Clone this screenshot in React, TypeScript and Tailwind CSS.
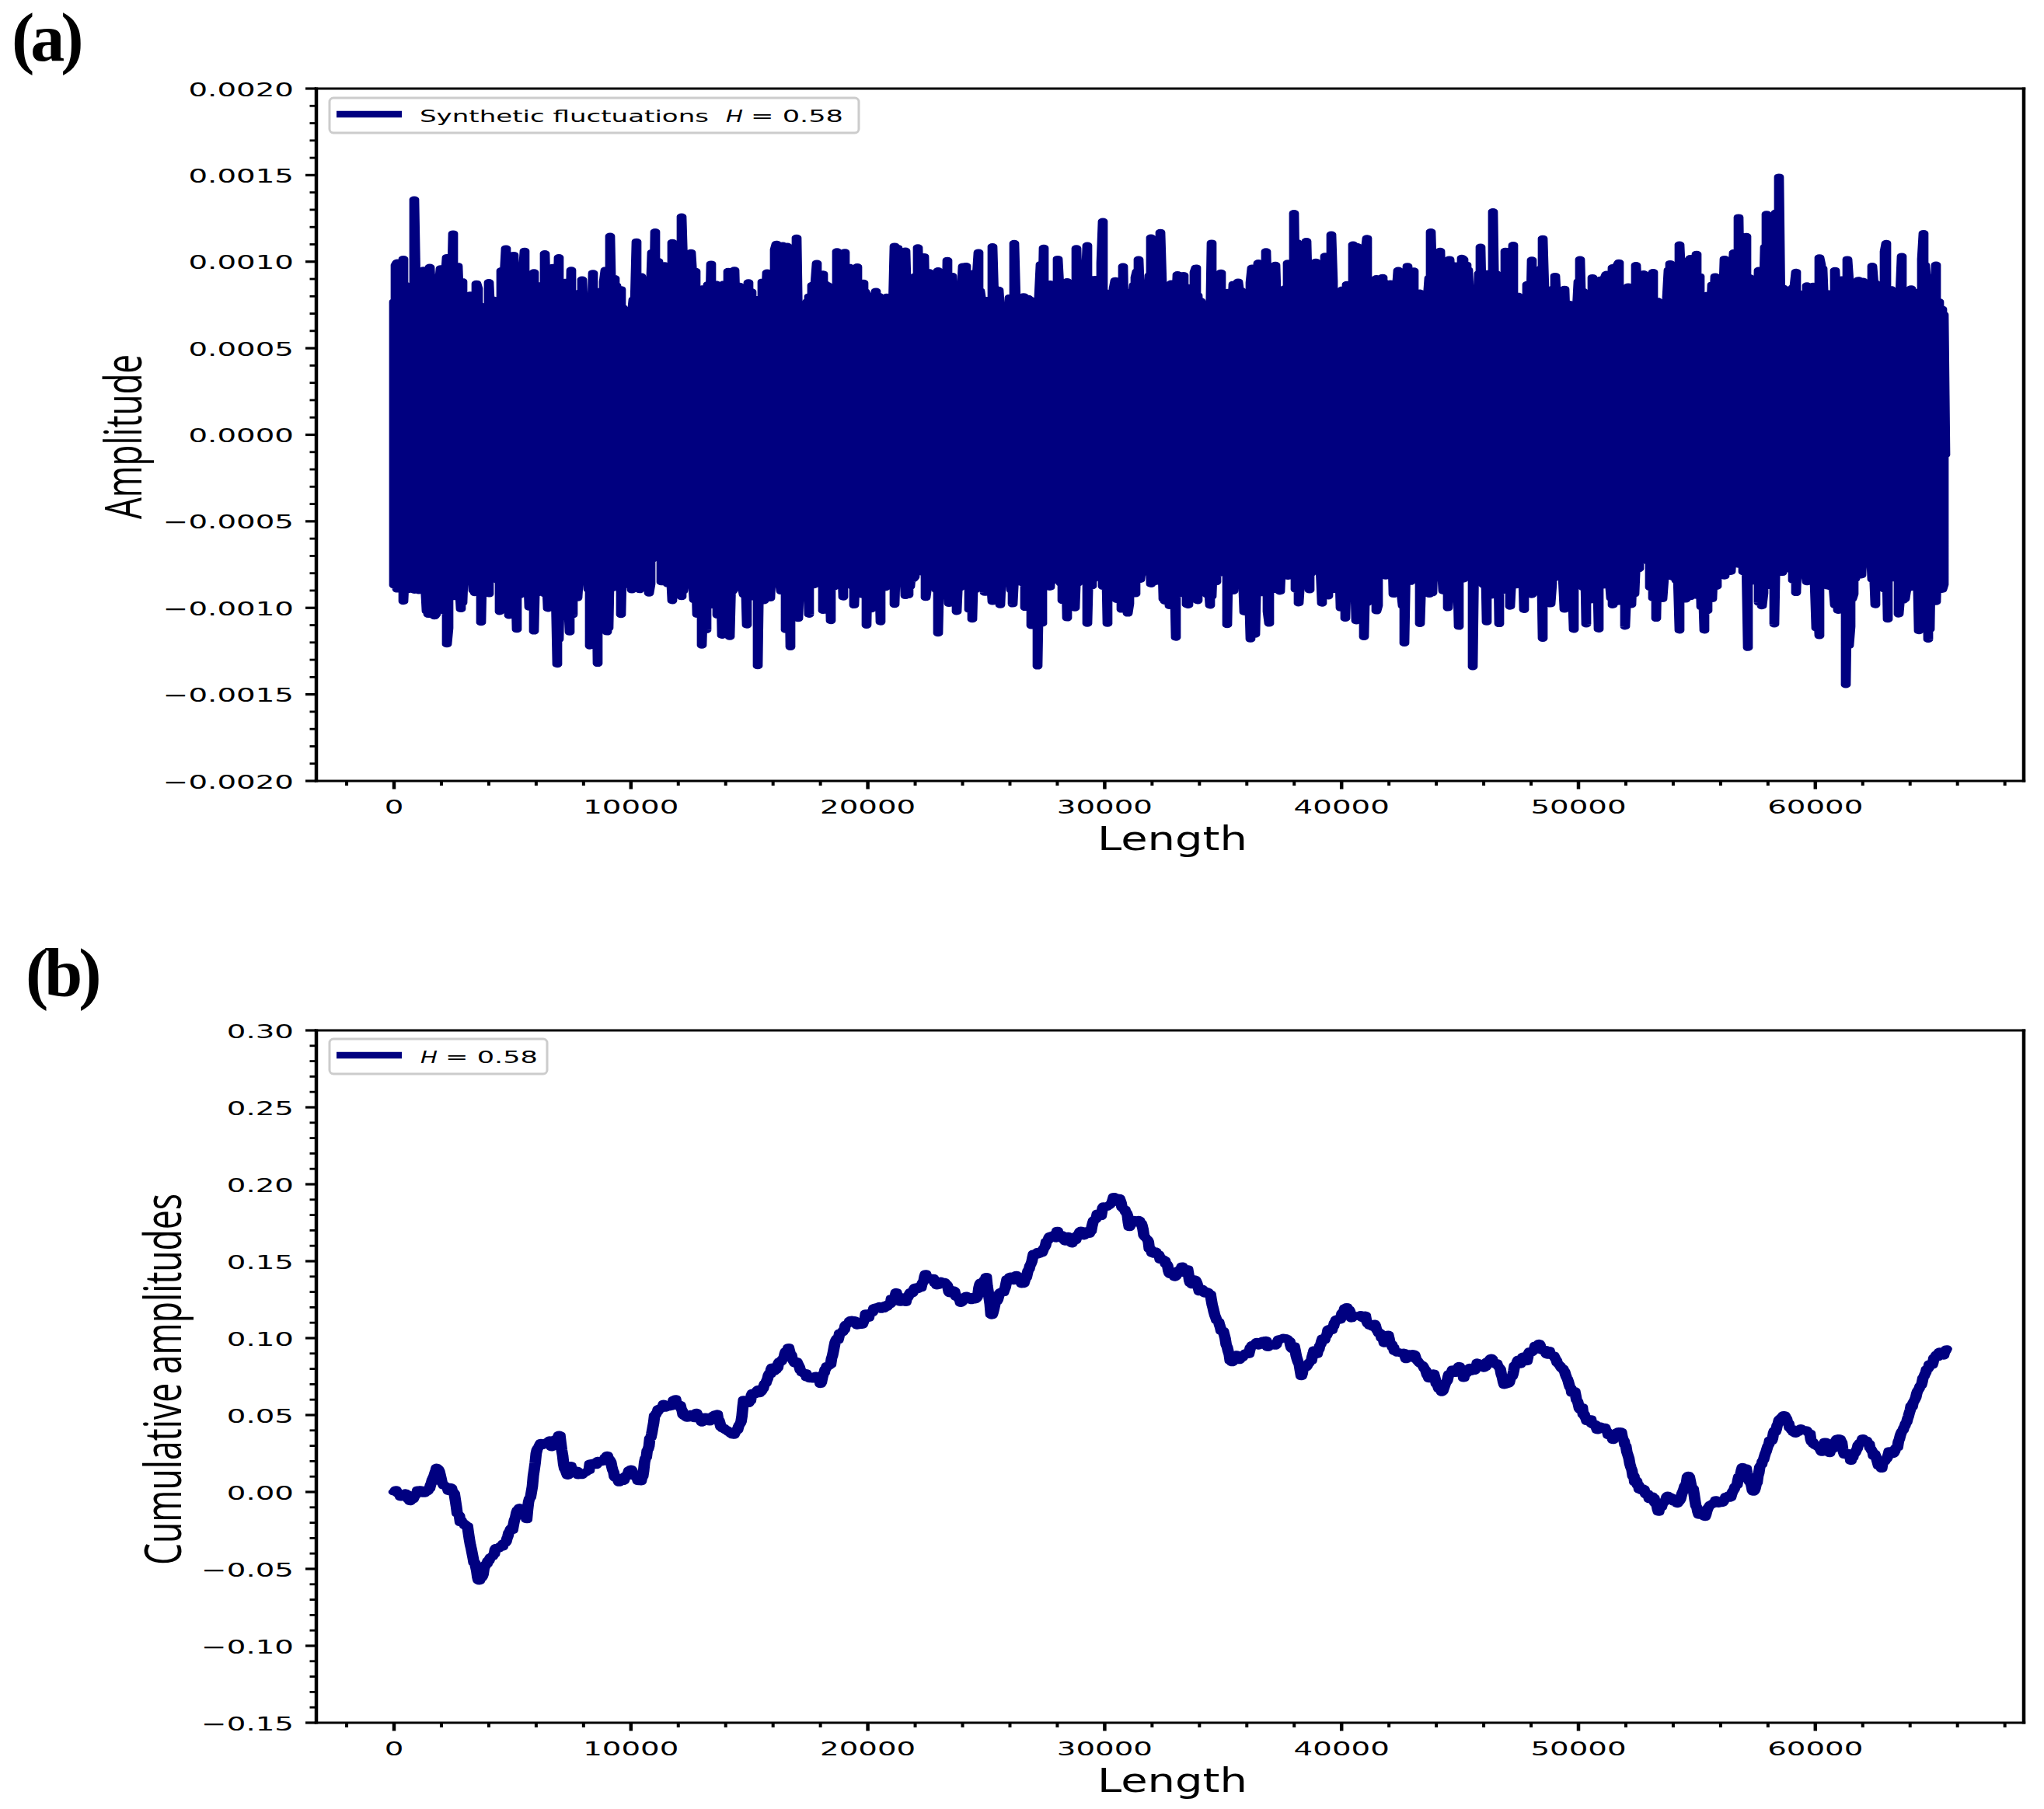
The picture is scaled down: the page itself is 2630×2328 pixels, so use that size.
import React from 'react';

const NAVY = '#000080';
const L = 407;
const R = 2604;
const SX = 1.55;
const X = (d: number) => 507 + d * 0.03048;

function mulberry32(seed: number) {
  let a = seed;
  return function () {
    a |= 0;
    a = (a + 0x6d2b79f5) | 0;
    let t = Math.imul(a ^ (a >>> 15), 1 | a);
    t = (t + Math.imul(t ^ (t >>> 7), 61 | t)) ^ t;
    return ((t ^ (t >>> 14)) >>> 0) / 4294967296;
  };
}

function gaussFactory(seed: number) {
  const rnd = mulberry32(seed);
  return () => {
    const u1 = rnd() || 1e-9;
    const u2 = rnd();
    return Math.sqrt(-2 * Math.log(u1)) * Math.cos(2 * Math.PI * u2);
  };
}

const YA = (v: number) => 114 + (0.002 - v) * 222750;
const YB = (v: number) => 1326 + (0.3 - v) * 1980;

// path coordinates are given in "unstretched" x (divided by SX); the group is scaled back by SX
function noisePath(): string {
  const g = gaussFactory(20240611);
  const N = 65536;
  const sigma = 0.000335;
  const colW = 2;
  const x0 = X(0);
  const x1 = X(N - 1);
  const ncol = Math.floor((x1 - x0) / colW);
  const mins = new Array(ncol + 1).fill(Infinity);
  const maxs = new Array(ncol + 1).fill(-Infinity);
  for (let i = 0; i < N; i++) {
    const v = g() * sigma;
    const c = Math.floor((i / (N - 1)) * ncol);
    if (v < mins[c]) mins[c] = v;
    if (v > maxs[c]) maxs[c] = v;
  }
  let d = '';
  for (let c = 0; c <= ncol; c++) {
    const x = ((x0 + c * colW) / SX).toFixed(2);
    const a = YA(maxs[c]).toFixed(1);
    const b = YA(mins[c]).toFixed(1);
    if (c === 0) d += `M${x},${a}L${x},${b}`;
    else if (c % 2 === 0) d += `L${x},${a}L${x},${b}`;
    else d += `L${x},${b}L${x},${a}`;
  }
  return d;
}

const CTRL: [number, number][] = [
  [0, 0], [0.4, -0.003], [0.8, -0.005], [1.2, -0.001], [1.5, 0.002], [1.8, 0.016], [2.1, 0.004], [2.5, 0.0],
  [2.8, -0.02], [3.1, -0.022], [3.3, -0.04], [3.6, -0.058], [4.0, -0.045], [4.5, -0.035], [5.0, -0.025],
  [5.3, -0.01], [5.6, -0.018], [5.8, 0.0], [6.0, 0.025], [6.2, 0.032], [6.5, 0.033], [7.0, 0.037],
  [7.2, 0.015], [7.5, 0.015], [8.0, 0.012], [8.5, 0.018], [9.0, 0.024], [9.5, 0.006], [10.0, 0.015],
  [10.5, 0.01], [10.8, 0.035], [11.0, 0.05], [11.5, 0.055], [11.8, 0.06], [12.2, 0.05], [13.0, 0.045],
  [14.0, 0.04], [14.5, 0.04], [14.8, 0.06], [15.5, 0.065], [16.0, 0.08], [16.5, 0.09], [17.0, 0.085],
  [17.5, 0.075], [18.0, 0.07], [18.2, 0.08], [18.7, 0.1], [19.2, 0.11], [19.8, 0.11], [20.3, 0.12],
  [20.8, 0.12], [21.2, 0.13], [21.8, 0.13], [22.4, 0.14], [23.0, 0.135], [23.5, 0.13], [24.0, 0.125],
  [24.5, 0.125], [25.0, 0.14], [25.2, 0.115], [25.6, 0.13], [26.0, 0.14], [26.5, 0.135], [27.0, 0.155],
  [27.5, 0.16], [28.0, 0.17], [28.5, 0.165], [29.0, 0.17], [29.5, 0.175], [30.0, 0.185], [30.5, 0.19],
  [31.0, 0.175], [31.5, 0.175], [32.0, 0.155], [32.5, 0.15], [33.0, 0.14], [33.5, 0.145], [34.0, 0.13],
  [34.5, 0.125], [35.0, 0.105], [35.3, 0.085], [36.0, 0.09], [36.5, 0.095], [37.0, 0.095], [37.5, 0.1],
  [38.0, 0.095], [38.3, 0.075], [38.8, 0.09], [39.2, 0.1], [39.7, 0.11], [40.5, 0.115], [41.0, 0.115],
  [41.5, 0.105], [42.0, 0.1], [42.5, 0.09], [43.0, 0.09], [43.5, 0.08], [44.0, 0.07], [44.5, 0.075],
  [45.0, 0.08], [45.5, 0.08], [46.2, 0.085], [46.7, 0.08], [47.0, 0.07], [47.5, 0.085], [48.3, 0.095],
  [48.8, 0.09], [49.3, 0.08], [49.8, 0.065], [50.2, 0.05], [50.8, 0.04], [51.5, 0.035], [52.0, 0.03],
  [52.3, 0.01], [52.8, 0.0], [53.5, -0.01], [54.0, -0.005], [54.3, -0.005], [54.6, 0.01], [55.0, -0.01],
  [55.3, -0.015], [55.8, -0.005], [56.5, 0.0], [57.0, 0.015], [57.5, 0.005], [58.0, 0.03], [58.7, 0.05],
  [59.0, 0.04], [59.5, 0.04], [60.0, 0.03], [60.6, 0.025], [61.0, 0.035], [61.5, 0.02], [62.0, 0.035],
  [62.5, 0.025], [62.8, 0.015], [63.2, 0.025], [63.7, 0.04], [64.2, 0.06], [64.7, 0.08], [65.2, 0.09],
  [65.535, 0.093],
];

function cumPath(): string {
  const g = gaussFactory(777);
  const step = 0.04;
  const pts: [number, number][] = [];
  for (let s = 0; s < CTRL.length - 1; s++) {
    const [xa, va] = CTRL[s];
    const [xb, vb] = CTRL[s + 1];
    const n = Math.max(2, Math.round((xb - xa) / step));
    const walk: number[] = [0];
    for (let i = 1; i <= n; i++) walk.push(walk[i - 1] + g() * 0.0014);
    const end = walk[n];
    for (let i = 0; i < n; i++) {
      const t = i / n;
      const bridge = walk[i] - t * end;
      pts.push([xa + (xb - xa) * t, va + (vb - va) * t + bridge]);
    }
  }
  pts.push(CTRL[CTRL.length - 1]);
  return pts
    .map(([x, v], i) => `${i === 0 ? 'M' : 'L'}${(X(x * 1000) / SX).toFixed(2)},${YB(v).toFixed(1)}`)
    .join('');
}

const NOISE = noisePath();
const CUM = cumPath();

type Tick = { v: number; label: string };

type LegendPart = { x: number; w: number; text: string; italic?: boolean };

type PanelProps = {
  vbTop: number;
  vbH: number;
  T: number;
  B: number;
  Y: (v: number) => number;
  yMajor: Tick[];
  yMinor: number[];
  legend: { y: number; w: number; h: number; lineY: number; parts: LegendPart[] };
  ylabel: { x: number; cy: number; len: number; text: string };
  children: React.ReactNode;
};

const X_MAJOR = [0, 10000, 20000, 30000, 40000, 50000, 60000];
const X_MINOR: number[] = [];
for (let k = -1; k <= 34; k++) if (k % 5 !== 0) X_MINOR.push(k * 2000);

function Panel({ vbTop, vbH, T, B, Y, yMajor, yMinor, legend, ylabel, children }: PanelProps) {
  return (
    <svg
      className="block w-[2630px] font-['DejaVu_Sans',sans-serif]"
      style={{ height: vbH }}
      viewBox={`0 ${vbTop} 2630 ${vbH}`}
      xmlns="http://www.w3.org/2000/svg"
    >
      <g transform={`scale(${SX} 1)`}>{children}</g>

      {/* legend */}
      <rect x={424} y={legend.y} width={legend.w} height={legend.h} rx={5} fill="white" fillOpacity={0.85} stroke="#cccccc" strokeWidth={3} />
      <line x1={433} x2={517} y1={legend.lineY} y2={legend.lineY} stroke={NAVY} strokeWidth={8.5} />
      {legend.parts.map((p) => (
        <text
          key={p.text}
          transform={`translate(${p.x} ${legend.lineY + 10}) scale(${SX} 1)`}
          fontSize={22}
          fontStyle={p.italic ? 'italic' : 'normal'}
          fill="black"
          textLength={p.w / SX}
          lengthAdjust="spacingAndGlyphs"
        >
          {p.text}
        </text>
      ))}

      {/* spines */}
      <line x1={L} x2={L} y1={T - 1.6} y2={B + 1.6} stroke="black" strokeWidth={4.5} />
      <line x1={R} x2={R} y1={T - 1.6} y2={B + 1.6} stroke="black" strokeWidth={4.5} />
      <line x1={L - 2.2} x2={R + 2.2} y1={T} y2={T} stroke="black" strokeWidth={3.2} />
      <line x1={L - 2.2} x2={R + 2.2} y1={B} y2={B} stroke="black" strokeWidth={3.2} />

      {/* x ticks */}
      {X_MAJOR.map((d) => (
        <g key={`xM${d}`}>
          <line x1={X(d)} x2={X(d)} y1={B} y2={B + 10.5} stroke="black" strokeWidth={4.5} />
          <text transform={`translate(${X(d)} ${B + 41.5}) scale(${SX} 1)`} textAnchor="middle" fontSize={25} fill="black">
            {d}
          </text>
        </g>
      ))}
      {X_MINOR.map((d) => (
        <line key={`xm${d}`} x1={X(d)} x2={X(d)} y1={B} y2={B + 6} stroke="black" strokeWidth={4} />
      ))}

      {/* y ticks */}
      {yMajor.map((t) => (
        <g key={`yM${t.v}`}>
          <line x1={L - 14} x2={L} y1={Y(t.v)} y2={Y(t.v)} stroke="black" strokeWidth={3.2} />
          <text transform={`translate(378 ${Y(t.v) + 9.5}) scale(${SX} 1)`} textAnchor="end" fontSize={25} fill="black">
            {t.label}
          </text>
        </g>
      ))}
      {yMinor.map((v) => (
        <line key={`ym${v}`} x1={L - 8.5} x2={L} y1={Y(v)} y2={Y(v)} stroke="black" strokeWidth={2.8} />
      ))}

      {/* x label */}
      <text x={1412} y={B + 89} fontSize={42.5} fill="black" textLength={193} lengthAdjust="spacingAndGlyphs">
        Length
      </text>

      {/* y label */}
      <text
        transform={`translate(${ylabel.x} ${ylabel.cy}) scale(${SX} 1) rotate(-90)`}
        x={-ylabel.len / 2}
        y={0}
        fontSize={42.5}
        fill="black"
        className="font-['Open_Sans',sans-serif]"
        textLength={ylabel.len}
        lengthAdjust="spacingAndGlyphs"
      >
        {ylabel.text}
      </text>
    </svg>
  );
}

const fmtA = (k: number) => {
  const v = k * 0.0005;
  const s = Math.abs(v).toFixed(4);
  return v < -1e-12 ? `\u2212${s}` : s;
};
const fmtB = (k: number) => {
  const v = k * 0.05;
  const s = Math.abs(v).toFixed(2);
  return v < -1e-12 ? `\u2212${s}` : s;
};

const A_MAJOR: Tick[] = [];
for (let k = -4; k <= 4; k++) A_MAJOR.push({ v: k * 0.0005, label: fmtA(k) });
const A_MINOR: number[] = [];
for (let k = -20; k <= 20; k++) if (k % 5 !== 0) A_MINOR.push(k * 0.0001);

const B_MAJOR: Tick[] = [];
for (let k = -3; k <= 6; k++) B_MAJOR.push({ v: k * 0.05, label: fmtB(k) });
const B_MINOR: number[] = [];
for (let k = -15; k <= 30; k++) if (k % 5 !== 0) B_MINOR.push(k * 0.01);

export default function App() {
  return (
    <div className="w-[2630px] h-[2328px] bg-white flex flex-col overflow-hidden">
      <div className="h-[100px] pl-[15px] pt-[5px] font-['Liberation_Serif',serif] font-bold text-[88px] leading-none tracking-[-5px] text-black">
        (a)
      </div>
      <Panel
        vbTop={100}
        vbH={1064}
        T={114}
        B={1005}
        Y={YA}
        yMajor={A_MAJOR}
        yMinor={A_MINOR}
        legend={{
          y: 126,
          w: 681,
          h: 45,
          lineY: 147,
          parts: [
            { x: 540, w: 372, text: 'Synthetic fluctuations' },
            { x: 934, w: 22, text: 'H', italic: true },
            { x: 966, w: 119, text: '= 0.58' },
          ],
        }}
        ylabel={{ x: 182, cy: 562, len: 212, text: 'Amplitude' }}
      >
        <path d={NOISE} fill="none" stroke={NAVY} strokeWidth={8.2} strokeLinejoin="round" strokeLinecap="round" />
      </Panel>
      <div className="h-[146px] pl-[33px] pt-[45px] font-['Liberation_Serif',serif] font-bold text-[88px] leading-none tracking-[-5px] text-black">
        (b)
      </div>
      <Panel
        vbTop={1310}
        vbH={1018}
        T={1326}
        B={2217}
        Y={YB}
        yMajor={B_MAJOR}
        yMinor={B_MINOR}
        legend={{
          y: 1337,
          w: 280,
          h: 45,
          lineY: 1358,
          parts: [
            { x: 541, w: 22, text: 'H', italic: true },
            { x: 573, w: 119, text: '= 0.58' },
          ],
        }}
        ylabel={{ x: 233, cy: 1775, len: 478, text: 'Cumulative amplitudes' }}
      >
        <path d={CUM} fill="none" stroke={NAVY} strokeWidth={9.5} strokeLinejoin="round" strokeLinecap="round" />
      </Panel>
    </div>
  );
}
